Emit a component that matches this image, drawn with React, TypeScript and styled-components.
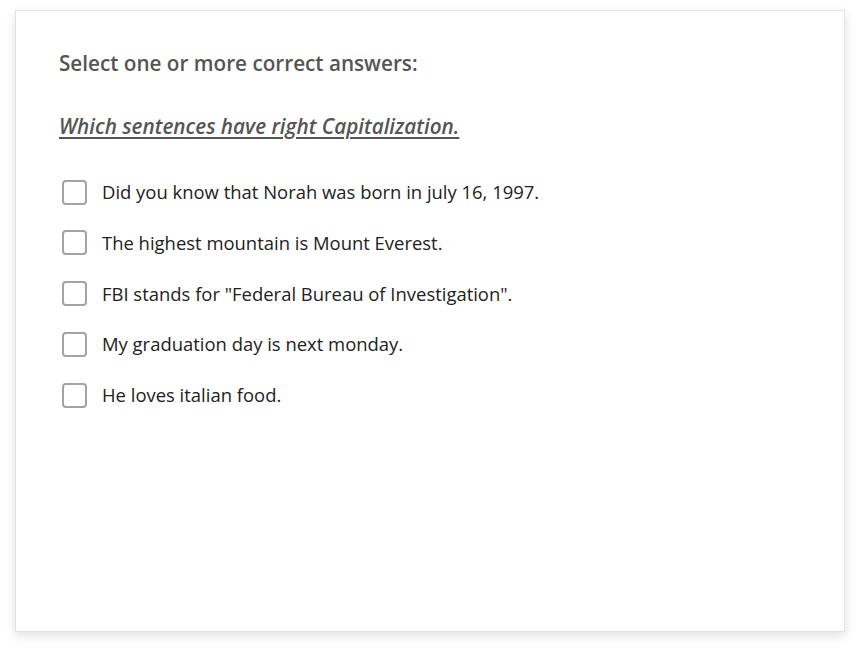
import React from "react";
import styled, { createGlobalStyle } from "styled-components";

const Global = createGlobalStyle`
  html, body { margin: 0; padding: 0; background: #ffffff; }
  body { font-family: "Open Sans", "Liberation Sans", sans-serif; }
`;

const Page = styled.div`
  padding: 10px 16px 21px 15px;
  box-sizing: border-box;
  width: 861px;
  height: 653px;
  display: flex;
`;

const Card = styled.div`
  flex: 1;
  background: #fff;
  border: 1px solid #e2e2e2;
  box-shadow: 0 4px 10px rgba(0, 0, 0, 0.12);
  padding: 38px 43px;
  box-sizing: border-box;
`;

const Prompt = styled.div`
  font-size: 20.7px;
  font-weight: 600;
  color: #555555;
  line-height: 28px;
`;

const Question = styled.div`
  margin-top: 35px;
  font-size: 20.7px;
  font-weight: 600;
  font-style: italic;
  text-decoration: underline;
  text-underline-offset: 3px;
  color: #555555;
  line-height: 28px;
`;

const Options = styled.div`
  margin-top: 39px;
  display: flex;
  flex-direction: column;
  gap: 24.8px;
`;

const Option = styled.label`
  display: flex;
  align-items: center;
  gap: 15px;
  font-size: 18.45px;
  color: #222;
  line-height: 26px;
  cursor: pointer;
`;

const Box = styled.span`
  width: 25px;
  height: 25px;
  box-sizing: border-box;
  border: 2px solid #a3a3a3;
  border-radius: 4px;
  background: #fff;
  flex: none;
  margin-left: 3px;
`;

const options = [
  "Did you know that Norah was born in july 16, 1997.",
  "The highest mountain is Mount Everest.",
  'FBI stands for "Federal Bureau of Investigation".',
  "My graduation day is next monday.",
  "He loves italian food.",
];

export default function App() {
  return (
    <>
      <Global />
      <Page>
        <Card>
          <Prompt>Select one or more correct answers:</Prompt>
          <Question>Which sentences have right Capitalization.</Question>
          <Options>
            {options.map((o) => (
              <Option key={o}>
                <Box />
                {o}
              </Option>
            ))}
          </Options>
        </Card>
      </Page>
    </>
  );
}
